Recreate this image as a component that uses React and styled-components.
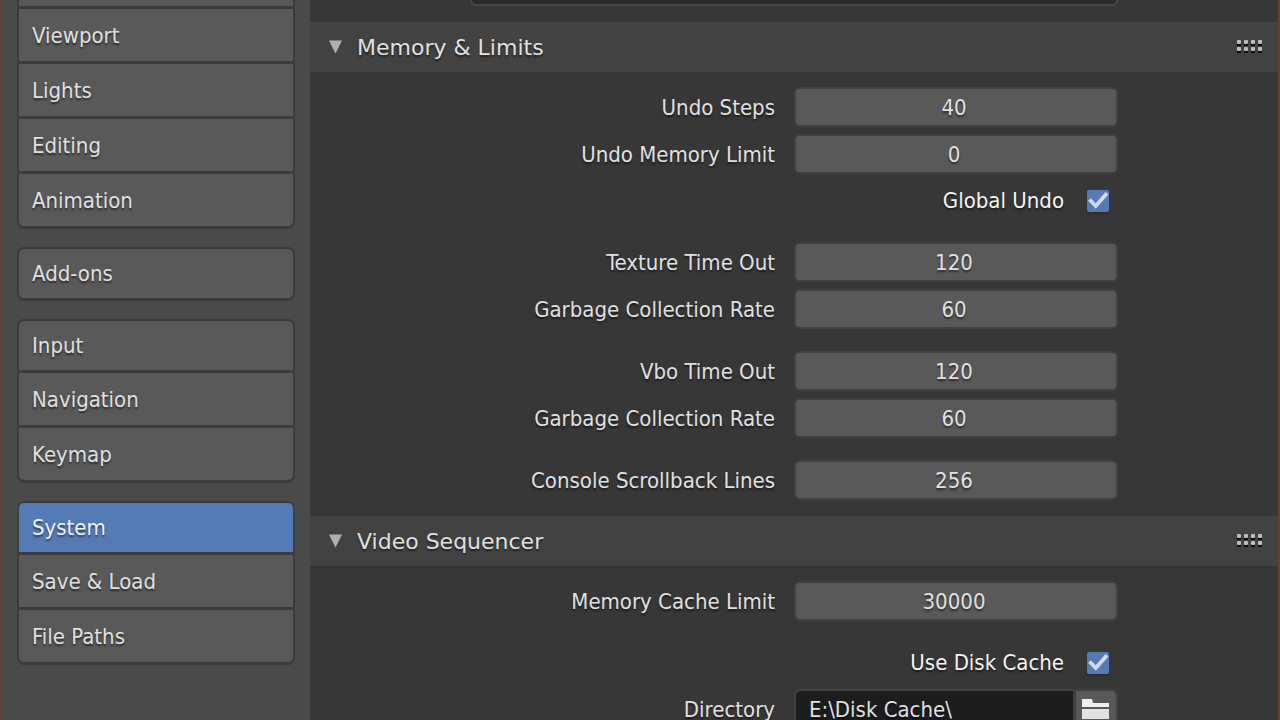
import React, {useState} from 'react';
import styled, {createGlobalStyle} from 'styled-components';

const navGroups = [
    ['Add-ons'],
    ['Input', 'Navigation', 'Keymap'],
    ['System', 'Save & Load', 'File Paths'],
];

const NumberRow = ({id, label, value}) => (
    <Row>
        <RowLabel htmlFor={id}>{label}</RowLabel>
        <NumberField id={id} type="text" inputMode="numeric" defaultValue={value} />
    </Row>
);

const CheckRow = ({id, label}) => {
    const [checked, setChecked] = useState(true);

    return (
        <CheckLine>
            <CheckLabel htmlFor={id}>{label}</CheckLabel>
            <CheckWrap>
                <CheckInput id={id} type="checkbox" checked={checked} onChange={(e) => setChecked(e.target.checked)} />
                {checked && (
                    <CheckMark viewBox="0 0 22 22" aria-hidden="true">
                        <path d="M2.5 9.5 L8.8 16 L20 3.2" fill="none" stroke="#d0daee" strokeWidth="3.8" />
                    </CheckMark>
                )}
            </CheckWrap>
        </CheckLine>
    );
};

const Panel = ({title, children}) => (
    <section>
        <PanelHeader type="button">
            <Arrow viewBox="0 0 14 14" aria-hidden="true">
                <path d="M0 0.5 H13 L6.5 13.5 Z" fill="#b0b0b0" />
            </Arrow>
            <PanelTitle>{title}</PanelTitle>
            <Grip viewBox="0 0 26 14" aria-hidden="true">
                {[0, 7].map((y) => [0, 7, 14, 21].map((x) => (
                    <g key={`${x}-${y}`}>
                        <rect x={x} y={y + 3} width="4" height="3" fill="#0c0c0c" />
                        <rect x={x} y={y} width="4" height="4" rx="1" fill="#bdbdbd" />
                    </g>
                )))}
            </Grip>
        </PanelHeader>
        <PanelBody>{children}</PanelBody>
    </section>
);

const App = () => {
    const [active, setActive] = useState('System');

    const renderItem = (name) => (
        <NavItem key={name} type="button" $active={name === active} onClick={() => setActive(name)}>{name}</NavItem>
    );

    return (
        <Window>
            <GlobalStyle />
            <Sidebar>
                <NavGroup $cut>
                    <NavStub />
                    {['Viewport', 'Lights', 'Editing', 'Animation'].map(renderItem)}
                </NavGroup>
                {navGroups.map((group) => (
                    <NavGroup key={group[0]}>{group.map(renderItem)}</NavGroup>
                ))}
            </Sidebar>
            <Main>
                <PreviousPanel>
                    <ListBoxEnd />
                </PreviousPanel>
                <Panel title="Memory & Limits">
                    <RowGroup>
                        <NumberRow id="undo-steps" label="Undo Steps" value="40" />
                        <NumberRow id="undo-memory" label="Undo Memory Limit" value="0" />
                        <CheckRow id="global-undo" label="Global Undo" />
                    </RowGroup>
                    <RowGroup>
                        <NumberRow id="texture-timeout" label="Texture Time Out" value="120" />
                        <NumberRow id="texture-rate" label="Garbage Collection Rate" value="60" />
                    </RowGroup>
                    <RowGroup>
                        <NumberRow id="vbo-timeout" label="Vbo Time Out" value="120" />
                        <NumberRow id="vbo-rate" label="Garbage Collection Rate" value="60" />
                    </RowGroup>
                    <RowGroup>
                        <NumberRow id="scrollback" label="Console Scrollback Lines" value="256" />
                    </RowGroup>
                </Panel>
                <Panel title="Video Sequencer">
                    <RowGroup>
                        <NumberRow id="cache-limit" label="Memory Cache Limit" value="30000" />
                    </RowGroup>
                    <RowGroup>
                        <CheckRow id="disk-cache" label="Use Disk Cache" />
                        <Row>
                            <RowLabel htmlFor="directory">Directory</RowLabel>
                            <PathField>
                                <PathInput id="directory" type="text" defaultValue="E:\Disk Cache\" />
                                <BrowseButton type="button" aria-label="Browse">
                                    <FolderIcon viewBox="0 0 28 20" aria-hidden="true">
                                        <path d="M0 0 H10 L11 4 H27 V8 H0 Z" fill="#f0f0f0" />
                                        <path d="M0 10 H27 V20 H0 Z" fill="#e2e2e2" />
                                    </FolderIcon>
                                </BrowseButton>
                            </PathField>
                        </Row>
                    </RowGroup>
                </Panel>
            </Main>
        </Window>
    );
};

export default App;

const GlobalStyle = createGlobalStyle`
    * {
        box-sizing: border-box;
    }
    body {
        margin: 0;
        background-color: #373737;
    }
    body, button, input {
        font-family: "DejaVu Sans Condensed", "DejaVu Sans", sans-serif;
        font-size: 22px;
        color: #e0e0e0;
        text-shadow: 0 2px 2px rgba(0, 0, 0, 0.5);
    }
`

const Window = styled.div`
    display: grid;
    grid-template-columns: 308px 1fr;
    height: 100vh;
    overflow: hidden;
    border-left: 2px solid #683f30;
    border-right: 2px solid #683f30;
`

const Sidebar = styled.nav`
    display: flex;
    flex-direction: column;
    gap: 18px;
    padding: 0 15px;
    background-color: #4a4a4a;
`

const NavGroup = styled.div`
    display: flex;
    flex-direction: column;
    gap: 3px;
    flex-shrink: 0;
    padding: ${({$cut}) => ($cut ? '0' : '2px')} 2px 3px;
    border-radius: ${({$cut}) => ($cut ? '0 0 7px 7px' : '7px')};
    background-color: #3c3c3c;
`

const NavStub = styled.div`
    height: 6px;
    background-color: #595959;
`

const NavItem = styled.button`
    height: 52px;
    padding: 0 13px;
    border: none;
    text-align: left;
    background-color: ${({$active}) => ($active ? '#557bb7' : '#595959')};
    color: ${({$active}) => ($active ? '#f2f2f2' : '#e0e0e0')};
    &:first-child {
        height: 49px;
        border-top-left-radius: 5px;
        border-top-right-radius: 5px;
    }
    &:last-child {
        border-bottom-left-radius: 5px;
        border-bottom-right-radius: 5px;
    }
`

const Main = styled.main`
    min-width: 0;
    overflow: hidden;
    background-color: #373737;
`

const PreviousPanel = styled.div`
    height: 22px;
    padding: 0 160px;
`

const ListBoxEnd = styled.div`
    height: 6px;
    border: 2px solid #474747;
    border-top: none;
    border-radius: 0 0 6px 6px;
    background-color: #2b2b2b;
`

const PanelHeader = styled.button`
    display: flex;
    align-items: center;
    width: 100%;
    height: 50px;
    padding: 0 15px 0 19px;
    border: none;
    background-color: #424242;
`

const Arrow = styled.svg`
    width: 14px;
    height: 14px;
`

const PanelTitle = styled.span`
    flex: 1;
    padding-left: 14px;
    text-align: left;
    font-family: "DejaVu Sans", sans-serif;
`

const Grip = styled.svg`
    width: 26px;
    height: 14px;
`

const PanelBody = styled.div`
    display: flex;
    flex-direction: column;
    gap: 22px;
    padding: 15px 160px 16px;
`

const RowGroup = styled.div`
    display: flex;
    flex-direction: column;
    gap: 7px;
`

const Row = styled.div`
    display: grid;
    grid-template-columns: 1fr 1fr;
    align-items: center;
    height: 40px;
`

const RowLabel = styled.label`
    padding-right: 19px;
    text-align: right;
    white-space: nowrap;
`

const NumberField = styled.input`
    width: 100%;
    height: 40px;
    padding: 0 4px 0 0;
    border: 2px solid #414141;
    border-radius: 6px;
    background-color: #595959;
    text-align: center;
`

const CheckLine = styled.div`
    display: flex;
    align-items: center;
    justify-content: flex-end;
    gap: 23px;
    height: 39px;
    padding-right: 9px;
`

const CheckLabel = styled.label`
    color: #f4f4f4;
`

const CheckWrap = styled.span`
    position: relative;
    display: flex;
`

const CheckInput = styled.input`
    appearance: none;
    width: 22px;
    height: 22px;
    margin: 0;
    border-radius: 2px;
    background-color: #595959;
    box-shadow: 0 2px 2px rgba(0, 0, 0, 0.2);
    &:checked {
        background-color: #557bb7;
    }
`

const CheckMark = styled.svg`
    position: absolute;
    inset: 0;
    pointer-events: none;
`

const PathField = styled.div`
    display: flex;
    gap: 3px;
    height: 40px;
    padding: 2px;
    border-radius: 6px;
    background-color: #414141;
`

const PathInput = styled.input`
    flex: 1;
    min-width: 0;
    padding: 0 13px;
    border: none;
    border-radius: 5px 0 0 5px;
    background-color: #1d1d1d;
`

const BrowseButton = styled.button`
    display: flex;
    align-items: center;
    justify-content: center;
    width: 40px;
    padding: 0;
    border: none;
    border-radius: 0 5px 5px 0;
    background-color: #595959;
`

const FolderIcon = styled.svg`
    width: 28px;
    height: 20px;
`
